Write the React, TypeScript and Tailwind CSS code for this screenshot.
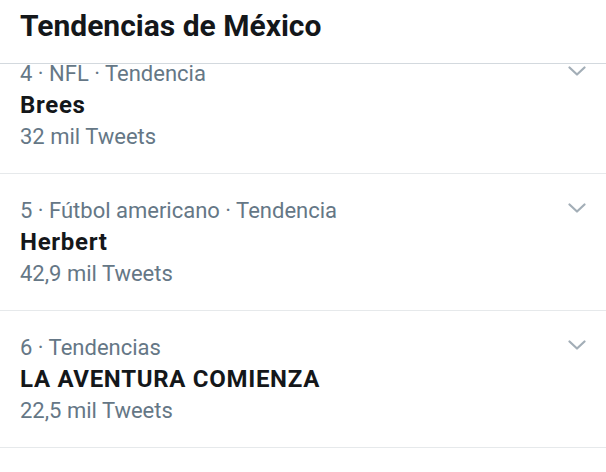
import React from "react";

const trends = [
  { meta: "4 · NFL · Tendencia", title: "Brees", count: "32 mil Tweets" },
  { meta: "5 · Fútbol americano · Tendencia", title: "Herbert", count: "42,9 mil Tweets" },
  { meta: "6 · Tendencias", title: "LA AVENTURA COMIENZA", count: "22,5 mil Tweets" },
];

function Chevron() {
  return (
    <svg width="18" height="11" viewBox="0 0 18 11" className="shrink-0 mt-[9px]">
      <polyline points="1.5,1.5 9,8.5 16.5,1.5" fill="none" stroke="#a3aeb7" strokeWidth="2.2" strokeLinecap="round" strokeLinejoin="round" />
    </svg>
  );
}

export default function App() {
  return (
    <div className="w-[606px] h-[472px] bg-white overflow-hidden" style={{ fontFamily: "Roboto, 'Noto Sans', sans-serif" }}>
      <div className="relative z-10 bg-white pt-[8px] pb-[19px] px-[20px] border-b border-[#d3d9de]">
        <h1 className="text-[30px] leading-[36px] font-bold text-[#14171a]">Tendencias de México</h1>
      </div>
      <div>
        {trends.map((t, i) => (
          <div
            key={i}
            className={`flex items-start justify-between pl-[20px] pr-[20px] pt-[20px] pb-[20px] border-b border-[#e6e9eb] ${i === 0 ? "-mt-[27px]" : ""}`}
          >
            <div>
              <div className="text-[22px] leading-[33px] text-[#657786]">{t.meta}</div>
              <div className="text-[24px] leading-[31px] tracking-[0.7px] font-bold text-[#14171a]">{t.title}</div>
              <div className="text-[22px] leading-[32px] text-[#657786]">{t.count}</div>
            </div>
            <Chevron />
          </div>
        ))}
      </div>
    </div>
  );
}
